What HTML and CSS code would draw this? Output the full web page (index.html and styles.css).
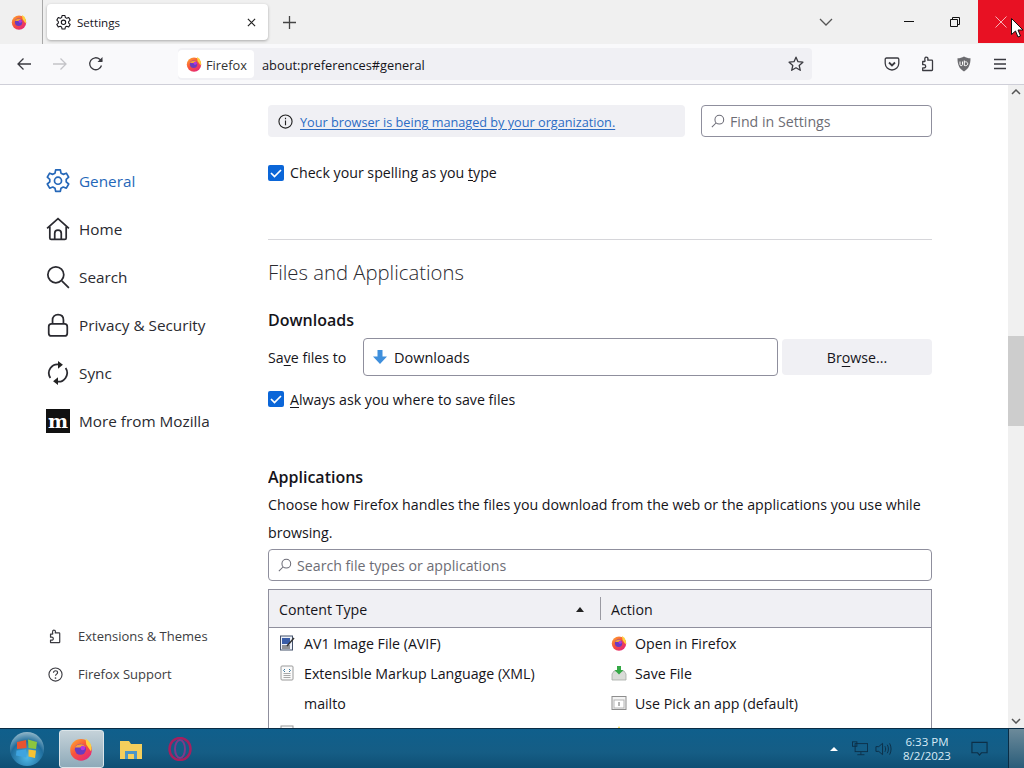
FILE: index.html
```html
<!DOCTYPE html>
<html lang="en">
<head>
<meta charset="utf-8">
<title>Settings</title>
<link rel="stylesheet" href="styles.css">
</head>
<body>
<svg class="defs" width="0" height="0" aria-hidden="true">
  <defs>
    <linearGradient id="fxg" x1="0" y1="0" x2="0.8" y2="1"><stop offset="0" stop-color="#ffb02e"/><stop offset=".5" stop-color="#f8533c"/><stop offset="1" stop-color="#e3247d"/></linearGradient>
    <symbol id="fx" viewBox="0 0 16 16">
      <circle cx="8" cy="8.600" r="7.200" fill="url(#fxg)"/>
      <path d="M11 1c2.600 1.500 4 3.800 4 6.500 0 .8-.2 1.500-.4 2L11.500 5z" fill="#ffd13b"/>
      <circle cx="7.600" cy="8.200" r="3.700" fill="#6a3bc0"/>
      <path d="M4 7c1-2 3-2.500 5-2 1 .4 1.500 1 2 1.600-1.500-.6-2.500-.4-3.500.4H5z" fill="#f5a03a"/>
      <circle cx="9.200" cy="7.300" r="1.500" fill="#b833e1"/>
    </symbol>
    <symbol id="gear" viewBox="1 .8 18 18.400">
      <path d="M8.200 1.500h3.600l.5 2.500 1.700.9 2.400-.9 1.800 3.100-1.900 1.700v1.900l1.900 1.600-1.800 3.200-2.400-.9-1.700.9-.5 2.500H8.200l-.5-2.500-1.700-.9-2.400.9-1.800-3.200 1.900-1.600V8.800L1.800 7.100l1.800-3.100 2.400.9 1.700-.9z" fill="none" stroke="currentColor" stroke-width="1.300" stroke-linejoin="round"/>
      <circle cx="10" cy="9.800" r="2.700" fill="none" stroke="currentColor" stroke-width="1.300"/>
    </symbol>
    <symbol id="puzzle" viewBox="0 0 16 16">
      <path d="M6 1.200c1.300 0 2 .8 2 1.800 0 .5-.2.8-.3 1.200h4.100c.4 0 .7.300.7.700v8.900c0 .4-.3.700-.7.700H2.700v-2.600h1.200c1 0 1.800-.7 1.800-1.600s-.8-1.600-1.800-1.600H2.700V5.500h1.900c.3 0 .5-.2.500-.5-.1-.4-.3-.8-.3-1.400 0-1.300.6-2.400 1.200-2.400z" fill="none" stroke="currentColor" stroke-width="1.300" stroke-linejoin="round"/>
    </symbol>
  </defs>
</svg>

<header class="tabbar">
  <div class="pinned"><svg class="i16"><use href="#fx"/></svg></div>
  <div class="tab">
    <svg class="tab-gear"><use href="#gear"/></svg>
    <span class="tab-title">Settings</span>
    <svg class="tab-x" viewBox="0 0 10 10"><path d="M1 1l8 8M9 1l-8 8"/></svg>
  </div>
  <svg class="newtab" viewBox="0 0 12 12"><path d="M6 0v12M0 6h12"/></svg>
  <div class="spring"></div>
  <svg class="tablist" viewBox="0 0 14 8"><path d="M1 1l6 6 6-6"/></svg>
  <div class="winbtn"><svg class="w-min" viewBox="0 0 10 1"><path d="M0 .5h10"/></svg></div>
  <div class="winbtn"><svg class="w-max" viewBox="0 0 10 10"><path d="M.5 2.500h7v7h-7zM2.500 2.500v-2h7v7h-2"/></svg></div>
  <div class="winbtn close"><svg class="w-x" viewBox="0 0 12 12"><path d="M.5.5l11 11M11.500.5l-11 11"/></svg></div>
  <svg class="cursor" viewBox="0 0 12 20"><path d="M.5.5v16l4-3.500 2.500 6 2.500-1-2.500-6h5z"/></svg>
</header>

<nav class="toolbar">
  <svg class="tb tb-back" viewBox="0 0 16 16"><path d="M15 8H2M7.500 2.500L2 8l5.500 5.500"/></svg>
  <svg class="tb tb-fwd" viewBox="0 0 16 16"><path d="M1 8h13M8.500 2.500L14 8l-5.500 5.500"/></svg>
  <svg class="tb tb-reload" viewBox="0 0 16 16"><path d="M13.500 9.500A6 6 0 1 1 11.800 3.300L14 5.200"/><path class="solid" d="M14.500 1v5h-5z"/></svg>
  <div class="urlbar">
    <div class="identity"><svg class="i16"><use href="#fx"/></svg><span>Firefox</span></div>
    <span class="url">about:preferences#general</span>
    <svg class="tb star" viewBox="0 0 16 16"><path d="M8 1.200l2 4.500 4.900.5-3.700 3.300 1.100 4.800L8 11.800l-4.300 2.500 1.100-4.800L1.100 6.200 6 5.700z" stroke-linejoin="round"/></svg>
  </div>
  <div class="tb-right">
    <svg class="tb" viewBox="0 0 16 16"><path d="M2.500 2h11c.8 0 1.300.5 1.300 1.300v4A6.800 6.800 0 0 1 8 14 6.800 6.800 0 0 1 1.200 7.300v-4C1.200 2.500 1.700 2 2.500 2z"/><path d="M5 6.500l3 3 3-3" stroke-width="1.800"/></svg>
    <svg class="tb"><use href="#puzzle"/></svg>
    <svg class="tb ublock" viewBox="0 0 16 16"><path class="shield" d="M8 .5c2 1.200 4 1.700 6.500 1.800 0 6-1.500 10.500-6.500 13.200C3 12.800 1.500 8.300 1.500 2.300 4 2.200 6 1.700 8 .5z"/><path class="ub" d="M4 5.500v3c0 1.500 2.500 1.500 2.500 0v-3M8.300 4.500v5c1.800.5 3.400-.2 3.400-1.800S10 5.500 8.300 6"/></svg>
    <svg class="tb" viewBox="0 0 16 16"><path d="M2 3.500h12M2 8h12M2 12.500h12"/></svg>
  </div>
</nav>

<div class="page">
  <aside class="sidebar">
    <ul class="cats">
      <li class="cat active"><svg class="cat-i"><use href="#gear"/></svg><span class="cat-t">General</span></li>
      <li class="cat"><svg class="cat-i" viewBox="0 0 22 22"><path d="M1 10.500L11 1.500l10 9M3.500 9v10.200c0 .8.500 1.300 1.300 1.300h12.400c.8 0 1.300-.5 1.300-1.300V9M8 20.500v-5.500c0-1.800 1.200-3 3-3s3 1.200 3 3v5.500"/></svg><span class="cat-t">Home</span></li>
      <li class="cat"><svg class="cat-i" viewBox="0 0 22 22"><circle cx="9" cy="9" r="7.300"/><path d="M14.500 14.500l6.500 6.500"/></svg><span class="cat-t">Search</span></li>
      <li class="cat"><svg class="cat-i" viewBox="0 0 22 22"><rect x="2.500" y="10" width="17" height="11" rx="2.500"/><path d="M6 10V6.500c0-3 2-5 5-5s5 2 5 5V10"/></svg><span class="cat-t">Privacy &amp; Security</span></li>
      <li class="cat"><svg class="cat-i" viewBox="0 0 22 22"><path d="M4 15.500A8 8 0 0 1 12.500 3.300M18 6.500A8 8 0 0 1 9.500 18.700"/><path class="solid" d="M11 0l4.500 3.500L11 7zM11 15l-4.500 3.500L11 22z"/></svg><span class="cat-t">Sync</span></li>
      <li class="cat"><span class="moz"><span class="moz-m">m</span></span><span class="cat-t">More from Mozilla</span></li>
    </ul>
    <ul class="foot">
      <li class="foot-item"><svg class="foot-i"><use href="#puzzle"/></svg><span>Extensions &amp; Themes</span></li>
      <li class="foot-item"><svg class="foot-i" viewBox="0 0 16 16"><circle cx="8" cy="8" r="7"/><path d="M5.800 6.200C5.800 4.800 6.800 4 8 4s2.200.8 2.200 2c0 1.500-2.200 1.700-2.200 3.300"/><circle class="solid" cx="8" cy="11.700" r=".9"/></svg><span>Firefox Support</span></li>
    </ul>
  </aside>

  <main class="main">
    <div class="top">
      <div class="notice">
        <svg class="info" viewBox="0 0 16 16"><circle cx="8" cy="8" r="7"/><path d="M8 7v5M8 4v1.500"/></svg>
        <a class="link">Your browser is being managed by your organization.</a>
      </div>
      <div class="find input">
        <svg class="glass" viewBox="0 0 16 16"><circle cx="9.500" cy="6.500" r="5"/><path d="M6 10l-5 5"/></svg>
        <span class="ph">Find in Settings</span>
      </div>
    </div>

    <label class="check check-spell"><span class="box"><svg viewBox="0 0 16 16"><path d="M3 8l3.500 3.500L13 5"/></svg></span><span>Check your spelling as you <u>t</u>ype</span></label>

    <hr class="rule">
    <h1 class="h1">Files and Applications</h1>
    <h2 class="h2 h-down">Downloads</h2>

    <div class="save-row">
      <span class="save-label">Sa<u>v</u>e files to</span>
      <div class="save-field">
        <svg class="down" viewBox="0 0 16 16"><path d="M5.500 1h5v6.500H15L8 15 1 7.500h4.500z"/></svg>
        <span>Downloads</span>
      </div>
      <div class="browse">Br<u>o</u>wse...</div>
    </div>

    <label class="check check-ask"><span class="box"><svg viewBox="0 0 16 16"><path d="M3 8l3.500 3.500L13 5"/></svg></span><span><u>A</u>lways ask you where to save files</span></label>

    <h2 class="h2 h-apps">Applications</h2>
    <p class="desc">Choose how Firefox handles the files you download from the web or the applications you use while browsing.</p>

    <div class="search input">
      <svg class="glass" viewBox="0 0 16 16"><circle cx="9.500" cy="6.500" r="5"/><path d="M6 10l-5 5"/></svg>
      <span class="ph">Search file types or applications</span>
    </div>

    <div class="table">
      <div class="thead">
        <div class="th th-type"><span>Content Type</span><i class="sort"></i></div>
        <div class="th th-action">Action</div>
      </div>
      <div class="tr">
        <div class="td td-type">
          <svg class="ico" viewBox="0 0 16 16"><rect x="1.500" y="1" width="12" height="14" fill="#eef2fa" stroke="#45526b"/><rect x="3" y="3" width="8" height="6" fill="#3a5ea8"/><path d="M3 11h8M3 13h8" stroke="#333"/><path d="M8 11l7-8" stroke="#333" stroke-width="1.500"/></svg>
          <span>AV1 Image File (AVIF)</span>
        </div>
        <div class="td td-action"><svg class="ico"><use href="#fx"/></svg><span>Open in Firefox</span></div>
      </div>
      <div class="tr">
        <div class="td td-type">
          <svg class="ico" viewBox="0 0 16 16"><rect x="2" y="1" width="12" height="14" rx="1" fill="#fafafa" stroke="#9a9a9a"/><path d="M4.500 8.500h7M4.500 10.500h7M4.500 12.500h7" stroke="#a8a8a8"/><path d="M6 4l-1.500 1.500L6 7M10 4l1.500 1.500L10 7" fill="none" stroke="#3d7a9e"/></svg>
          <span>Extensible Markup Language (XML)</span>
        </div>
        <div class="td td-action"><svg class="ico" viewBox="0 0 16 16"><path d="M1 9l2-3h10l2 3v6H1z" fill="#d9dcd8" stroke="#a5aaa5" stroke-width=".8"/><path d="M6 1h4v4h2.500L8 9.500 3.500 5H6z" fill="#34a845"/></svg><span>Save File</span></div>
      </div>
      <div class="tr">
        <div class="td td-type td-noicon"><span>mailto</span></div>
        <div class="td td-action"><svg class="ico" viewBox="0 0 16 16"><rect x="1" y="1.500" width="14" height="13" fill="#f3f3f3" stroke="#8d8d8d"/><rect x="3" y="5" width="10" height="8" fill="#fff" stroke="#b5b5b5"/><path d="M8 7v4" stroke="#6a6a6a"/></svg><span>Use Pick an app (default)</span></div>
      </div>
      <div class="tr">
        <div class="td td-type"><svg class="ico" viewBox="0 0 16 16"><rect x="2" y="1" width="12" height="14" fill="#fafafa" stroke="#9a9a9a"/></svg></div>
        <div class="td td-action"><svg class="ico" viewBox="0 0 16 16"><path d="M8 1l2 4 4 .5-3 3 1 4.500-4-2.200L4 13l1-4.500-3-3L6 5z" fill="#f2d53c"/></svg></div>
      </div>
    </div>
  </main>

  <div class="scrollbar">
    <svg class="arrow" viewBox="0 0 10 6"><path d="M1 5l4-4 4 4"/></svg>
    <div class="track"><div class="thumb"></div></div>
    <svg class="arrow" viewBox="0 0 10 6"><path d="M1 1l4 4 4-4"/></svg>
  </div>
</div>

<footer class="taskbar">
  <div class="start">
    <svg viewBox="0 0 36 36" class="orb">
      <defs><radialGradient id="orbg" cx=".5" cy=".75" r=".8"><stop offset="0" stop-color="#4fb8e8"/><stop offset=".6" stop-color="#1f6d9c"/><stop offset="1" stop-color="#a9c6d2"/></radialGradient></defs>
      <circle cx="18" cy="18" r="17" fill="url(#orbg)"/>
      <path d="M8 11l9-2 .5 8-9.500 1z" fill="#e8532f"/><path d="M19 8.500l9 2.500-1 7-7.500-1z" fill="#8cc63e"/><path d="M7.500 19.500l9.500-1 .5 8-10.500-2z" fill="#3fa4e0"/><path d="M19.500 18.500l7.500 1-1 7.500-6.500-1.500z" fill="#f6c233"/>
    </svg>
  </div>
  <div class="task-btn active"><svg class="task-i"><use href="#fx"/></svg></div>
  <div class="task-btn">
    <svg class="task-i" viewBox="0 0 24 24"><path d="M1 4h9l2 3h11v15H1z" fill="#f4cf5c"/><rect x="6" y="14" width="12" height="8" fill="#4a96c8"/><rect x="9" y="17" width="6" height="5" fill="#f4cf5c"/></svg>
  </div>
  <div class="task-btn">
    <svg class="task-i" viewBox="0 0 24 24"><ellipse cx="12" cy="12" rx="10.500" ry="11" fill="none" stroke="#a5205f" stroke-width="2.500"/><ellipse cx="12" cy="12" rx="5" ry="9" fill="none" stroke="#7d3a8a" stroke-width="2"/></svg>
  </div>
  <div class="spring"></div>
  <i class="tray-up"></i>
  <svg class="tray-net" viewBox="0 0 18 16"><rect x="3.500" y="2.500" width="14" height="9" fill="none" stroke="#0c2f47"/><path d="M10 12v3M6 15h8" stroke="#0c2f47"/><rect x=".5" y=".5" width="5" height="5" fill="none" stroke="#0c2f47"/></svg>
  <svg class="tray-vol" viewBox="0 0 18 16"><path d="M1 5.500h3L8 2v12L4 10.500H1z" fill="none" stroke="#0c2f47"/><path d="M10.500 5c1 1.800 1 4.200 0 6M13 3.500c1.600 2.800 1.600 6.200 0 9M15.500 2c2 3.800 2 8.200 0 12" fill="none" stroke="#0c2f47"/></svg>
  <div class="clock"><span>6:33 PM</span><span>8/2/2023</span></div>
  <svg class="tray-msg" viewBox="0 0 18 16"><path d="M1 1h16v11h-6l-2 2.500L7 12H1z" fill="none" stroke="#0c2f47" stroke-width="1.200"/></svg>
  <div class="show-desk"></div>
</footer>
</body>
</html>
```

FILE: styles.css
```css
* { box-sizing: border-box; }
html, body { margin: 0; height: 100%; }
body {
  width: 1024px; height: 768px; overflow: hidden;
  display: flex; flex-direction: column;
  font-family: "Open Sans", "Noto Sans", "Liberation Sans", sans-serif;
  font-size: 14.2px; color: #15141a; background: #fff;
}
.defs { position: absolute; }
svg { display: block; flex: none; }
u { text-underline-offset: 2px; text-decoration-thickness: 1px; }
.i16 { width: 16px; height: 16px; }
.spring { flex: 1; }

/* tab bar */
.tabbar { height: 44px; flex: none; display: flex; align-items: center; background: #f0f0f0; position: relative; }
.pinned { width: 43px; height: 44px; border-right: 1px solid #a8a8a8; display: flex; align-items: center; justify-content: center; padding-right: 5px; }
.tab { width: 221px; height: 36px; margin-left: 4px; background: #fff; border-radius: 4px; box-shadow: 0 1px 3px rgba(0,0,0,.3); display: flex; align-items: center; padding: 0 9px 0 9px; }
.tab-gear { width: 15px; height: 15px; color: #15141a; }
.tab-title { margin-left: 6px; font-size: 11.600px; flex: 1; }
.tab-x { width: 9px; height: 9px; stroke: #222; stroke-width: 1.300; margin-right: 3px; }
.newtab { width: 13px; height: 13px; margin-left: 15px; stroke: #444; stroke-width: 1.200; }
.tablist { width: 14px; height: 8px; margin-right: 53px; fill: none; stroke: #555; stroke-width: 1.300; }
.winbtn { width: 46px; height: 43px; display: flex; align-items: center; justify-content: center; fill: none; stroke: #111; margin-bottom: 1px; }
.w-min { width: 10px; height: 1px; margin-bottom: 1px; }
.w-max { width: 10px; height: 10px; }
.close { background: #e81123; stroke: #f6b3b8; }
.w-x { width: 12px; height: 12px; }
.cursor { position: absolute; right: 1px; top: 18px; width: 12px; height: 20px; fill: #fff; stroke: #111; stroke-width: 1; }

/* toolbar */
.toolbar { height: 41px; flex: none; display: flex; align-items: center; background: #f9f9fb; border-bottom: 1px solid #cfcfd8; }
.tb { width: 16px; height: 16px; fill: none; stroke: #3a3a40; stroke-width: 1.300; color: #3a3a40; }
.tb-back { margin-left: 16px; }
.tb-fwd { margin-left: 20px; stroke: #c4c4c8; }
.tb-reload { margin-left: 20px; }
.solid { fill: #222; stroke: none; }
.tb-reload .solid { fill: #3a3a40; }
.urlbar { width: 634px; height: 32px; margin-left: 74px; background: #f0f0f4; border-radius: 4px; display: flex; align-items: center; }
.identity { height: 28px; width: 76px; background: #fff; border-radius: 4px; display: flex; align-items: center; gap: 4px; padding-left: 8px; font-size: 12.800px; color: #333; flex: none; }
.identity span { padding-top: 2px; }
.url { margin-left: 8px; font-size: 12.800px; flex: 1; padding-top: 2px; }
.star { margin-right: 8px; }
.tb-right { margin-left: 72px; display: flex; gap: 20px; }
.ublock .shield { fill: #6c6c70; stroke: none; }
.ublock .ub { stroke: #fff; stroke-width: 1; }

/* page */
.page { flex: 1; min-height: 0; display: flex; overflow: hidden; }
.sidebar { width: 268px; flex: none; display: flex; flex-direction: column; padding: 72px 0 35px 46px; justify-content: space-between; }
.cats, .foot { list-style: none; margin: 0; padding: 0; }
.cat { height: 48px; display: flex; align-items: center; gap: 9px; font-size: 15.300px; color: #2a2a30; }
.cat-t { padding-bottom: 1px; }
.cat.active { color: #2567b8; }
.cat-i { width: 24px; height: 24px; fill: none; stroke: currentColor; stroke-width: 1.600; }
.moz { width: 24px; height: 24px; background: #111; display: flex; align-items: center; justify-content: center; flex: none; }
.moz-m { color: #fff; font: 800 19px/24px "DejaVu Serif", "Liberation Serif", serif; }
.foot-item { height: 38px; display: flex; align-items: center; gap: 15px; font-size: 13px; color: #3d3d42; padding-left: 2px; }
.foot-i { width: 15px; height: 15px; fill: none; stroke: #3a3a40; stroke-width: 1.200; color: #3a3a40; }
.foot .solid { fill: #3a3a40; }

.main { width: 664px; flex: none; padding-top: 20px; overflow: hidden; }
.top { display: flex; justify-content: space-between; height: 32px; }
.notice { width: 417px; background: #f0f0f4; border-radius: 4px; display: flex; align-items: center; padding-left: 10px; gap: 7px; }
.info { width: 15px; height: 15px; fill: none; stroke: #222; stroke-width: 1.200; }
.link { color: #2b6cc4; text-decoration: underline; font-size: 12.700px; text-underline-offset: 2px; padding-top: 2px; }
.input { border: 1px solid #8f8f9d; border-radius: 4px; display: flex; align-items: center; background: #fff; }
.find { width: 231px; padding-left: 9px; gap: 5px; }
.glass { width: 14px; height: 14px; fill: none; stroke: #6d6d78; stroke-width: 1.200; }
.ph { color: #6d6d75; }
.check { display: flex; align-items: center; gap: 6px; height: 20px; }
.box { width: 16px; height: 16px; background: #0b66d8; border-radius: 2px; flex: none; }
.box svg { width: 16px; height: 16px; fill: none; stroke: #fff; stroke-width: 1.700; }
.check-spell { margin-top: 26px; }
.check-spell > span:last-child { margin-top: -2px; }
.rule { border: 0; border-top: 1px solid #d6d6da; margin: 56px 0 0; }
.h1 { font-size: 20.300px; font-weight: 300; margin: 17px 0 0; line-height: 30px; color: #2a2a30; }
.h2 { font-size: 16px; font-weight: 600; margin: 0; line-height: 22px; }
.h-down { margin-top: 22px; }
.save-row { display: flex; align-items: center; margin-top: 7px; height: 38px; }
.save-label { width: 95px; }
.save-field { width: 415px; height: 38px; border: 1px solid #8f8f9d; border-radius: 4px; display: flex; align-items: center; padding-left: 8px; gap: 6px; font-size: 14.500px; }
.down { width: 16px; height: 16px; fill: #3f8fdc; }
.browse { width: 150px; height: 36px; margin-left: 4px; background: #f0f0f4; border-radius: 4px; display: flex; align-items: center; justify-content: center; }
.browse u { text-underline-offset: 3px; }
.check-ask { margin-top: 13px; }
.h-apps { margin-top: 57px; height: 22px; }
.desc { margin: 3px 0 0; line-height: 28px; }
.search { margin-top: 2px; height: 32px; padding-left: 9px; gap: 5px; }
.table { margin-top: 8px; border: 1px solid #8f8f9d; border-bottom: 0; }
.thead { display: flex; height: 38px; background: #f0f0f4; border-bottom: 1px solid #8f8f9d; align-items: center; }
.th { display: flex; align-items: center; height: 100%; padding-top: 1px; }
.th-type { width: 331px; padding-left: 10px; padding-right: 10px; justify-content: space-between; }
.th-type .sort { width: 0; height: 0; border: 4px solid transparent; border-bottom: 5px solid #222; border-top: 0; margin-right: 6px; }
.th-action { flex: 1; padding-left: 11px; position: relative; }
.th-action::before { content: ""; position: absolute; left: 0; top: 7px; bottom: 7px; width: 1px; background: #9a9aa2; }
.tr { display: flex; height: 30px; align-items: center; }
.td { display: flex; align-items: center; gap: 9px; }
.td-type { width: 331px; padding-left: 10px; }
.td-noicon { padding-left: 35px; }
.td-action { flex: 1; padding-left: 11px; gap: 8px; }
.ico { width: 16px; height: 16px; }

/* scrollbar */
.scrollbar { width: 16px; margin-left: auto; flex: none; background: #f0f0f0; display: flex; flex-direction: column; align-items: center; padding: 4px 0; }
.arrow { width: 10px; height: 6px; fill: none; stroke: #555; stroke-width: 1.500; }
.track { flex: 1; width: 100%; padding-top: 241px; }
.thumb { height: 90px; background: #cdcdcd; }

/* taskbar */
.taskbar { height: 40px; flex: none; display: flex; align-items: center; background: linear-gradient(#0f5f8c, #155d85 60%, #0e4f74); border-top: 1px solid #0a2c44; position: relative; z-index: 1; }
.start { width: 59px; display: flex; justify-content: center; padding-right: 5px; }
.orb { width: 36px; height: 36px; }
.task-btn { width: 46px; height: 38px; margin-right: 3px; display: flex; align-items: center; justify-content: center; }
.task-btn.active { width: 45px; margin-right: 4px; padding-right: 2px; background: linear-gradient(#c5d2d9, #8eaab9); border: 1px solid #dbe5ea; border-radius: 3px; }
.task-i { width: 24px; height: 24px; }
.tray-up { width: 0; height: 0; border: 4px solid transparent; border-bottom: 4px solid #fff; border-top: 0; margin-right: 14px; }
.tray-net { width: 16px; height: 15px; margin-right: 7px; }
.tray-vol { width: 17px; height: 16px; margin-right: 7px; }
.clock { display: flex; flex-direction: column; align-items: center; color: #d8ebf7; font-size: 11.500px; line-height: 14px; width: 56px; }
.tray-msg { width: 17px; height: 16px; margin: 0 20px 0 16px; }
.show-desk { width: 16px; height: 100%; background: linear-gradient(#6c8a9a, #2a5d7a); border-left: 1px solid #0a2c44; }
```
